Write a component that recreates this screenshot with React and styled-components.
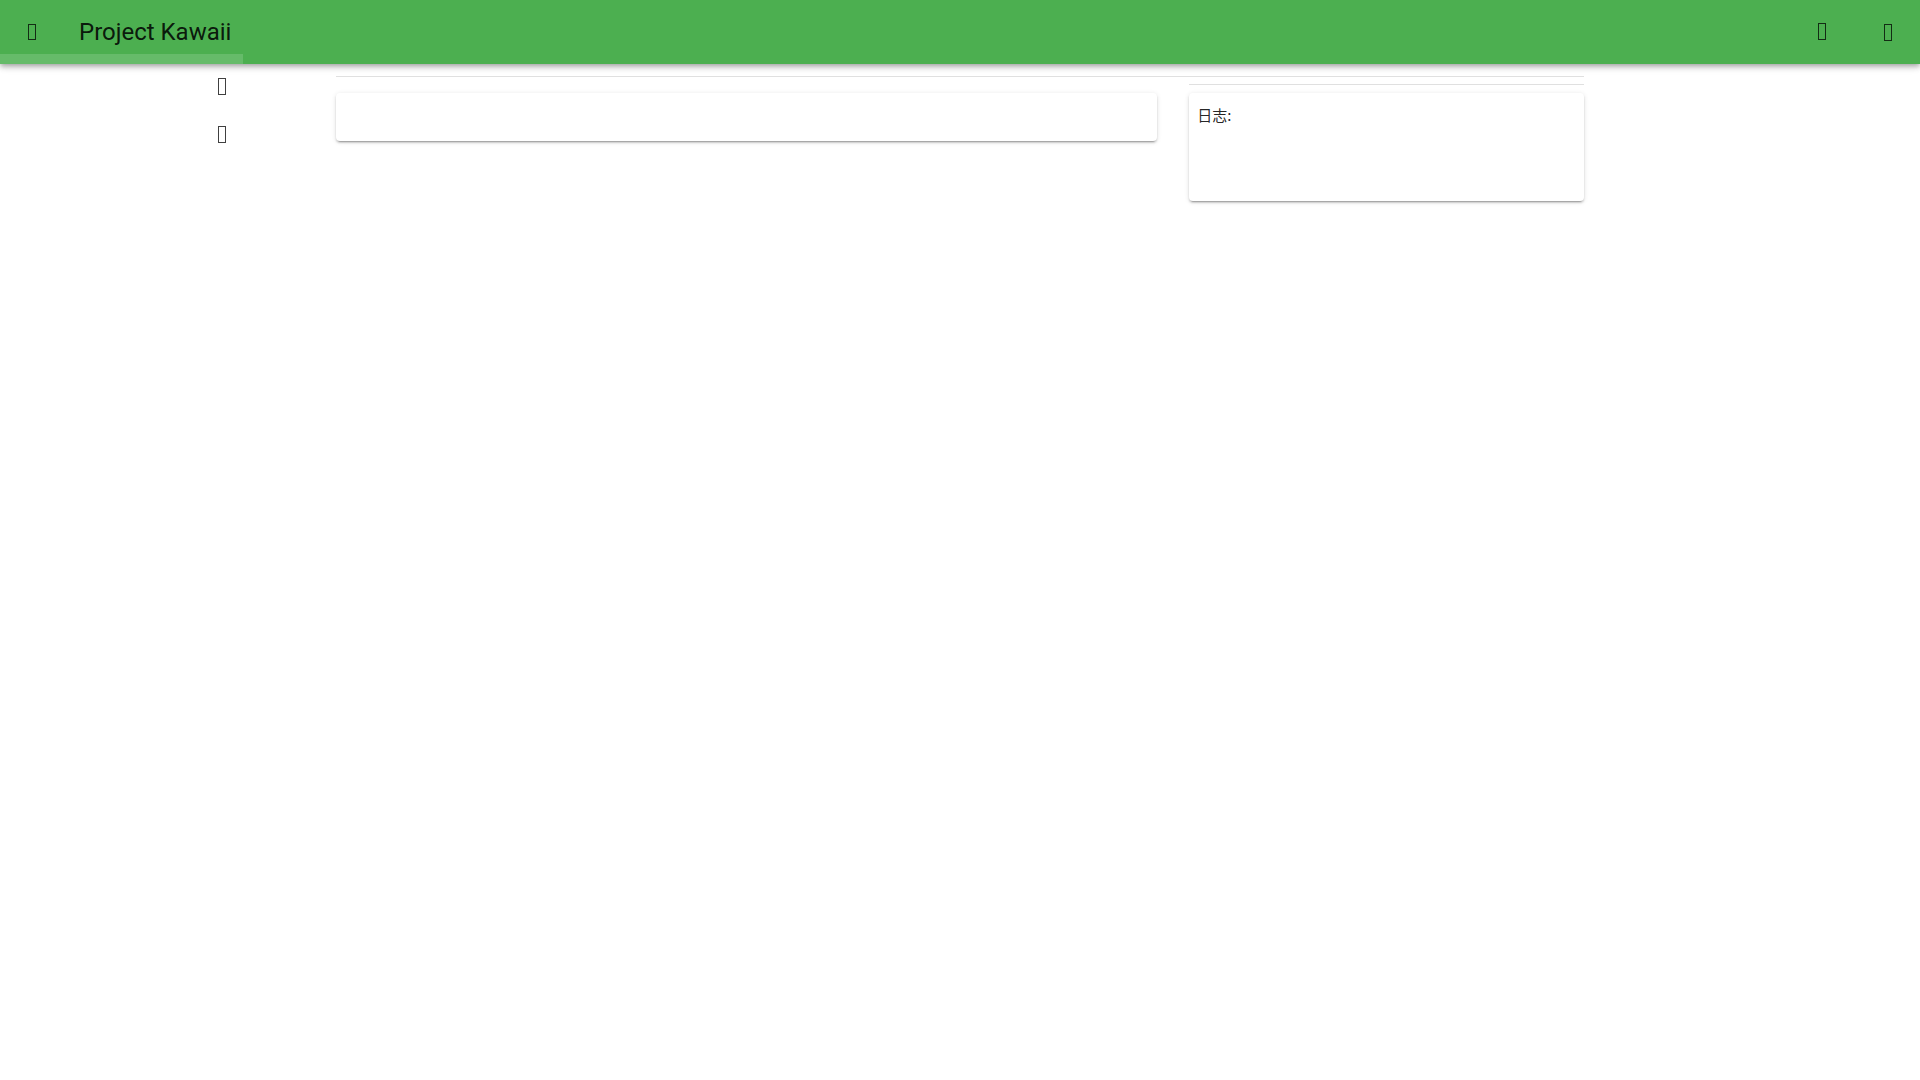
import React from "react";
import styled, { createGlobalStyle } from "styled-components";

const GlobalStyle = createGlobalStyle`
	html, body {
		margin: 0;
		padding: 0;
		background: #fff;
		font-family: Roboto, "Noto Sans CJK SC", sans-serif;
		color: rgba(0, 0, 0, 0.87);
	}
`;

const Page = styled.div`
	min-height: 100vh;
	background: #fff;
`;

const AppBar = styled.header`
	position: relative;
	z-index: 2;
	height: 64px;
	background: #4caf50;
	display: flex;
	align-items: center;
	padding: 0 8px;
	box-sizing: border-box;
	box-shadow: 0 2px 4px -1px rgba(0, 0, 0, 0.2), 0 4px 5px 0 rgba(0, 0, 0, 0.14),
		0 1px 10px 0 rgba(0, 0, 0, 0.12);
`;

const Strip = styled.div`
	position: absolute;
	left: 0;
	bottom: 0;
	width: 243px;
	height: 10px;
	background: rgba(255, 255, 255, 0.15);
`;

const IconButton = styled.button`
	width: 48px;
	height: 48px;
	border: none;
	background: transparent;
	padding: 0;
	display: flex;
	align-items: center;
	justify-content: center;
	cursor: pointer;
`;

// missing-glyph box, as the icon font never loaded
const Tofu = styled.span`
	display: inline-block;
	width: 6px;
	height: ${(props) => props.$h || 14}px;
	border: 1px solid rgba(0, 0, 0, 0.75);
	margin-top: ${(props) => props.$dy || 0}px;
`;

const Title = styled.h1`
	margin: 0 0 0 23px;
	font-family: Roboto, sans-serif;
	font-size: 24px;
	font-weight: 400;
	color: rgba(0, 0, 0, 0.87);
	flex: 1;
`;

const Actions = styled.div`
	display: flex;
	gap: 18px;
`;

const Body = styled.div`
	display: grid;
	grid-template-columns: 1fr 1280px 1fr;
`;

const Nav = styled.nav`
	width: 243px;
	display: flex;
	flex-direction: column;
`;

const NavItem = styled.div`
	height: 48px;
	display: flex;
	align-items: center;
	justify-content: flex-end;
	padding-right: 17px;
`;

const Container = styled.main`
	padding: 12px 16px 0;
`;

const Divider = styled.hr`
	margin: 0;
	border: none;
	border-top: 1px solid rgba(0, 0, 0, 0.12);
`;

const Row = styled.div`
	display: grid;
	grid-template-columns: 2fr 1fr;
	margin: 0 -16px;
`;

const Col = styled.div`
	padding: ${(props) => props.$top}px 16px 0;
`;

const Spacer = styled.div`
	height: 8px;
`;

const Card = styled.div`
	background: #fff;
	border-radius: 4px;
	min-height: ${(props) => props.$h}px;
	box-sizing: border-box;
	padding: 8px 8px;
	box-shadow: 0 3px 1px -2px rgba(0, 0, 0, 0.2), 0 2px 2px 0 rgba(0, 0, 0, 0.14),
		0 1px 5px 0 rgba(0, 0, 0, 0.12);
`;

const LogLabel = styled.div`
	font-family: "Noto Sans CJK SC", Roboto, sans-serif;
	font-size: 15px;
	line-height: 28px;
	color: rgba(0, 0, 0, 0.87);
`;

const App = () => {
	return (
		<Page>
			<GlobalStyle />
			<AppBar>
				<IconButton>
					<Tofu $h={14} />
				</IconButton>
				<Title>Project Kawaii</Title>
				<Actions>
					<IconButton>
						<Tofu $h={15} $dy={-2} />
					</IconButton>
					<IconButton>
						<Tofu $h={15} />
					</IconButton>
				</Actions>
				<Strip />
			</AppBar>
			<Body>
				<Nav>
					<NavItem>
						<Tofu $h={15} $dy={-4} />
					</NavItem>
					<NavItem>
						<Tofu $h={15} $dy={-4} />
					</NavItem>
				</Nav>
				<Container>
					<Divider />
					<Row>
						<Col $top={16}>
							<Card $h={48} />
						</Col>
						<Col $top={7}>
							<Divider />
							<Spacer />
							<Card $h={108}>
								<LogLabel>日志:</LogLabel>
							</Card>
						</Col>
					</Row>
				</Container>
				<div />
			</Body>
		</Page>
	);
};

export default App;
